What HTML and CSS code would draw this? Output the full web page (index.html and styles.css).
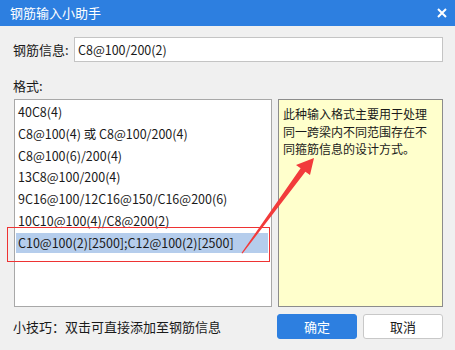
FILE: index.html
```html
<!DOCTYPE html>
<html lang="zh-CN">
<head>
    <meta charset="UTF-8">
    <title>钢筋输入小助手</title>
    <link rel="stylesheet" href="styles.css">
</head>
<body>

    <div class="dialog">
        <!-- Title bar -->
        <div class="titlebar">
            <span class="title">钢筋输入小助手</span>
            <svg class="close" width="10" height="10" viewBox="0 0 10 10">
                <path d="M1 1 L9 9 M9 1 L1 9" stroke="#fff" stroke-width="2" fill="none"/>
            </svg>
        </div>

        <div class="content">
            <div class="info-row">
                <label>钢筋信息:</label>
                <input type="text" class="info-input" value="C8@100/200(2)">
            </div>

            <div class="section-label">格式:</div>

            <div class="main">
                <ul class="format-list">
                    <li>40C8(4)</li>
                    <li>C8@100(4) 或 C8@100/200(4)</li>
                    <li>C8@100(6)/200(4)</li>
                    <li>13C8@100/200(4)</li>
                    <li>9C16@100/12C16@150/C16@200(6)</li>
                    <li>10C10@100(4)/C8@200(2)</li>
                    <li class="selected">C10@100(2)[2500];C12@100(2)[2500]</li>
                </ul>
                <div class="note">此种输入格式主要用于处理同一跨梁内不同范围存在不同箍筋信息的设计方式。</div>
            </div>

            <div class="footer">
                <span class="tip">小技巧：双击可直接添加至钢筋信息</span>
                <div class="buttons">
                    <button class="btn btn-primary">确定</button>
                    <button class="btn">取消</button>
                </div>
            </div>
        </div>

        <!-- Annotation overlay -->
        <div class="mark-box"></div>
        <svg class="mark-arrow" width="455" height="350" viewBox="0 0 455 350">
            <polygon points="241.5,253 300.6,168.2 296,165 314,158 310,175 305.4,171.8 242.5,253.5" fill="#f23b3b"/>
        </svg>
    </div>

</body>
</html>
```

FILE: styles.css
```css
/* Dialog */
body {
    margin: 0;
    font-family: "Noto Sans CJK SC", "Noto Sans", sans-serif;
    font-size: 13px;
    color: #1a1a1a;
    background-color: #f0f0f0;
}

.dialog {
    position: relative;
    width: 455px;
    height: 350px;
    background-color: #f0f0f0;
    overflow: hidden;
}

.titlebar {
    height: 26px;
    background-color: #2d7fe0;
    display: flex;
    align-items: center;
    justify-content: space-between;
    padding: 0 8px 0 10px;
}

.title {
    color: #fff;
    font-size: 13px;
    line-height: 26px;
}

.content {
    padding: 11px 12px 0 13px;
}

.info-row {
    display: flex;
    align-items: center;
    height: 25px;
}

.info-row label {
    width: 61px;
    line-height: 25px;
}

.info-input {
    flex: 1;
    height: 25px;
    box-sizing: border-box;
    border: 1px solid #c4c4c4;
    padding: 0 3px;
    font-family: inherit;
    font-size: 12.5px;
    color: #1a1a1a;
    background: #fff;
    outline: none;
}

.section-label {
    margin-top: 15px;
    line-height: 18px;
}

.main {
    display: flex;
    gap: 6px;
    margin-top: 4px;
    height: 208px;
}

.format-list {
    list-style: none;
    margin: 0;
    padding: 2px 3px 0 1px;
    margin-left: 1px;
    width: 258px;
    box-sizing: border-box;
    border: 1px solid #a8a8a8;
    background: #fff;
    font-size: 12.5px;
}

.format-list li {
    height: 20px;
    line-height: 20px;
    margin-bottom: 1.8px;
    padding-left: 2px;
    white-space: nowrap;
}

.format-list li.selected {
    background-color: #b5cdec;
}

.note {
    width: 165px;
    box-sizing: border-box;
    border: 1px solid #8c8c8c;
    background-color: #ffffcc;
    padding: 5px 12px 0 4px;
    font-size: 12px;
    line-height: 17.5px;
}

.footer {
    display: flex;
    justify-content: space-between;
    align-items: center;
    margin-top: 7px;
    height: 25px;
}

.tip {
    line-height: 25px;
}

.buttons {
    display: flex;
    gap: 6px;
}

.btn {
    width: 80px;
    height: 25px;
    border: 1px solid #c8c8c8;
    border-radius: 3px;
    background: #fff;
    font-family: inherit;
    font-size: 13px;
    color: #1a1a1a;
    padding: 0;
}

.btn-primary {
    background-color: #2d7fe0;
    border-color: #2d7fe0;
    color: #fff;
}

/* Red annotation */
.mark-box {
    position: absolute;
    left: 7px;
    top: 227px;
    width: 261px;
    height: 33px;
    border: 1px solid #ee3333;
}

.mark-arrow {
    position: absolute;
    left: 0;
    top: 0;
    pointer-events: none;
}
```
